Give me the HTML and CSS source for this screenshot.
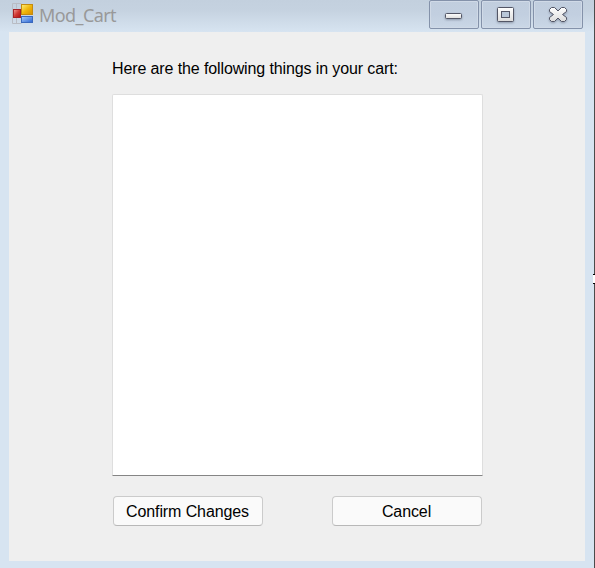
FILE: index.html
```html
<!DOCTYPE html>
<html lang="en">
<head>
<meta charset="utf-8">
<title>Mod_Cart</title>
<link rel="stylesheet" href="styles.css">
</head>
<body>
<div class="window">
  <header class="titlebar">
    <svg class="app-icon" width="22" height="22" viewBox="0 0 22 22">
      <defs>
        <linearGradient id="gold" x2="1" y2="1"><stop stop-color="#fff07a"/><stop offset=".5" stop-color="#f0b70c"/><stop offset="1" stop-color="#d98c00"/></linearGradient>
        <linearGradient id="red" x2="1" y2="1"><stop stop-color="#f3a09a"/><stop offset=".5" stop-color="#d13a33"/><stop offset="1" stop-color="#a80f10"/></linearGradient>
        <linearGradient id="blue" x2="1" y2="1"><stop stop-color="#a9d0ff"/><stop offset="1" stop-color="#2a62d0"/></linearGradient>
        <linearGradient id="metal" x2="0" y2="1"><stop stop-color="#fff"/><stop offset="1" stop-color="#dcdcdc"/></linearGradient>
      </defs>
      <path d="M.5.5h9M.5.5v20h9M4.500 15v5M4.500 .5v5" fill="none" stroke="#b9bcc4"/>
      <rect x="9.500" y="1.500" width="11" height="10" fill="url(#gold)" stroke="#c48b10"/>
      <rect x="1.500" y="6.500" width="7" height="8" fill="url(#red)" stroke="#a52327"/>
      <rect x="9.500" y="13.500" width="11" height="6" fill="url(#blue)" stroke="#3b69bd"/>
    </svg>
    <h1 class="title">Mod_Cart</h1>
    <div class="controls">
      <button class="control" aria-label="Minimize">
        <svg width="48" height="28" viewBox="0 0 48 28"><rect x="15.500" y="13.500" width="16" height="5" rx="1" fill="url(#metal)" stroke="#535666"/></svg>
      </button>
      <button class="control" aria-label="Maximize">
        <svg width="48" height="28" viewBox="0 0 48 28"><rect x="15.500" y="7.500" width="16" height="14" rx="1" fill="url(#metal)" stroke="#535666"/><rect x="19.500" y="11.500" width="8" height="6" fill="#b9c7d8" stroke="#535666"/></svg>
      </button>
      <button class="control" aria-label="Close">
        <svg width="48" height="28" viewBox="0 0 48 28"><path d="M17.500 7.500h3l3.500 3.500 3.500-3.500h3l2 2v2l-4 3 4 3v2l-2 2h-3l-3.500-3.500-3.500 3.500h-3l-2-2v-2l4-3-4-3v-2z" fill="url(#metal)" stroke="#535666" stroke-linejoin="round"/></svg>
      </button>
    </div>
  </header>
  <main class="client">
    <p class="label">Here are the following things in your cart:</p>
    <div class="list"></div>
    <div class="actions">
      <button class="button">Confirm Changes</button>
      <button class="button">Cancel</button>
    </div>
  </main>
  <div class="grip"></div>
</div>
</body>
</html>
```

FILE: styles.css
```css
* { box-sizing: border-box; }
body {
  margin: 0;
  font: 16px/20px "Liberation Sans", Arial, sans-serif;
  color: #000;
}
.window {
  position: relative;
  width: 595px;
  height: 568px;
  padding: 0 9px 7px;
  border-right: 1px solid #4b4b4b;
  background: linear-gradient(#c3d0de 0, #c5d2e0 10px, #d7e4f1 32px);
}
.titlebar {
  display: flex;
  align-items: flex-start;
  height: 32px;
}
.app-icon { margin: 3px 0 0 3px; }
.title {
  margin: 3px 0 0 5px;
  font: 400 18px/24px "Noto Sans", sans-serif;
  letter-spacing: -.6px;
  color: #999;
}
.controls {
  display: flex;
  gap: 2px;
  margin: 0 2px 0 auto;
}
.control {
  width: 50px;
  height: 29px;
  padding: 0;
  border: 1px solid #8492aa;
  border-radius: 2px;
  background: linear-gradient(#c1cede, #c2cfe0 50%, #cad7e6);
  box-shadow: inset 0 0 0 1px #d0dae7;
}
.control svg {
  display: block;
  margin-top: -1px;
  filter: drop-shadow(0 1px 1px rgba(70, 80, 100, .45));
}
.client {
  width: 576px;
  height: 529px;
  padding: 27px 102px 0 103px;
  background: #efefef;
}
.label {
  margin: 0 0 15px;
  height: 20px;
  letter-spacing: -.115px;
  white-space: nowrap;
}
.list {
  width: 371px;
  height: 382px;
  border: 1px solid #dedede;
  border-bottom-color: #858585;
  border-radius: 2px 2px 0 0;
  background: #fff;
}
.actions {
  display: flex;
  justify-content: space-between;
  margin: 20px 1px 0;
}
.button {
  width: 150px;
  height: 30px;
  padding: 2px 1px 0 0;
  border: 1px solid #cbcbcb;
  border-bottom-color: #b8b8b8;
  border-radius: 4px;
  background: #fafafa;
  font: inherit;
  letter-spacing: -.1px;
  color: #000;
}
.grip {
  position: absolute;
  right: -1px;
  top: 274px;
  width: 2px;
  height: 10px;
  border: solid #000;
  border-width: 1px 0;
  background: #fff;
}
```
